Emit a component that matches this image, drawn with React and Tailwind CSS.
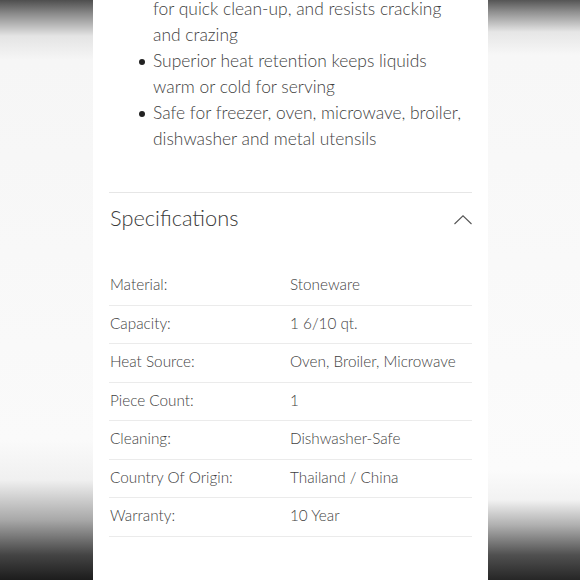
import React from "react";

const specs = [
  { label: "Material:", value: "Stoneware" },
  { label: "Capacity:", value: "1 6/10 qt." },
  { label: "Heat Source:", value: "Oven, Broiler, Microwave" },
  { label: "Piece Count:", value: "1" },
  { label: "Cleaning:", value: "Dishwasher-Safe" },
  { label: "Country Of Origin:", value: "Thailand / China" },
  { label: "Warranty:", value: "10 Year" },
];

function Bullet({ children }) {
  return (
    <li className="relative pl-[44px]">
      <span className="absolute left-[30px] top-[11px] w-[6px] h-[6px] rounded-full bg-[#222]" />
      {children}
    </li>
  );
}

export default function App() {
  return (
    <div
      className="flex w-[580px] h-[580px] overflow-hidden bg-white font-light"
      style={{ fontFamily: "Lato, 'Open Sans', sans-serif" }}
    >
      {/* blurred left edge */}
      <div className="w-[93px] h-full bg-[linear-gradient(to_bottom,#4e4e4e_0px,#8c8c8c_14px,#e4e4e4_36px,#f6f6f6_60px,#fafafa_440px,#f0f0f0_480px,#a8a8a8_520px,#444444_555px,#1c1c1c_580px)]" />

      {/* page panel */}
      <div className="w-[395px] h-full bg-white px-4 overflow-hidden text-[#3f3f3f]">
        <ul className="mt-[-30.5px] text-[17.4px] leading-[26px]">
          <Bullet>
            Nonporous glaze is easy to clean
            <br />
            for quick clean-up, and resists cracking
            <br />
            and crazing
          </Bullet>
          <Bullet>
            Superior heat retention keeps liquids
            <br />
            warm or cold for serving
          </Bullet>
          <Bullet>
            Safe for freezer, oven, microwave, broiler,
            <br />
            dishwasher and metal utensils
          </Bullet>
        </ul>

        <div className="mt-[40px] border-t border-[#e6e6e6] h-[54px] flex items-center justify-between">
          <h2 className="text-[21.8px] leading-none text-[#3a3a3a] pl-px mt-[-3px]">
            Specifications
          </h2>
          <svg width="18" height="10" viewBox="0 0 18 10" className="mt-[2px]">
            <polyline
              points="0.5,9 9,0.8 17.5,9"
              fill="none"
              stroke="#555"
              strokeWidth="1.1"
            />
          </svg>
        </div>

        <div className="mt-[21.5px] text-[15.3px]">
          {specs.map((s) => (
            <div
              key={s.label}
              className="grid grid-cols-[181px_1fr] h-[38.5px] pt-[7px] leading-[20px] border-b border-[#ebebeb]"
            >
              <span className="pl-px">{s.label}</span>
              <span>{s.value}</span>
            </div>
          ))}
        </div>
      </div>

      {/* blurred right edge */}
      <div className="flex-1 h-full bg-[linear-gradient(to_bottom,#555555_0px,#909090_12px,#e6e6e6_32px,#f7f7f7_55px,#fbfbfb_470px,#f2f2f2_500px,#b0b0b0_525px,#505050_555px,#262626_580px)]" />
    </div>
  );
}
